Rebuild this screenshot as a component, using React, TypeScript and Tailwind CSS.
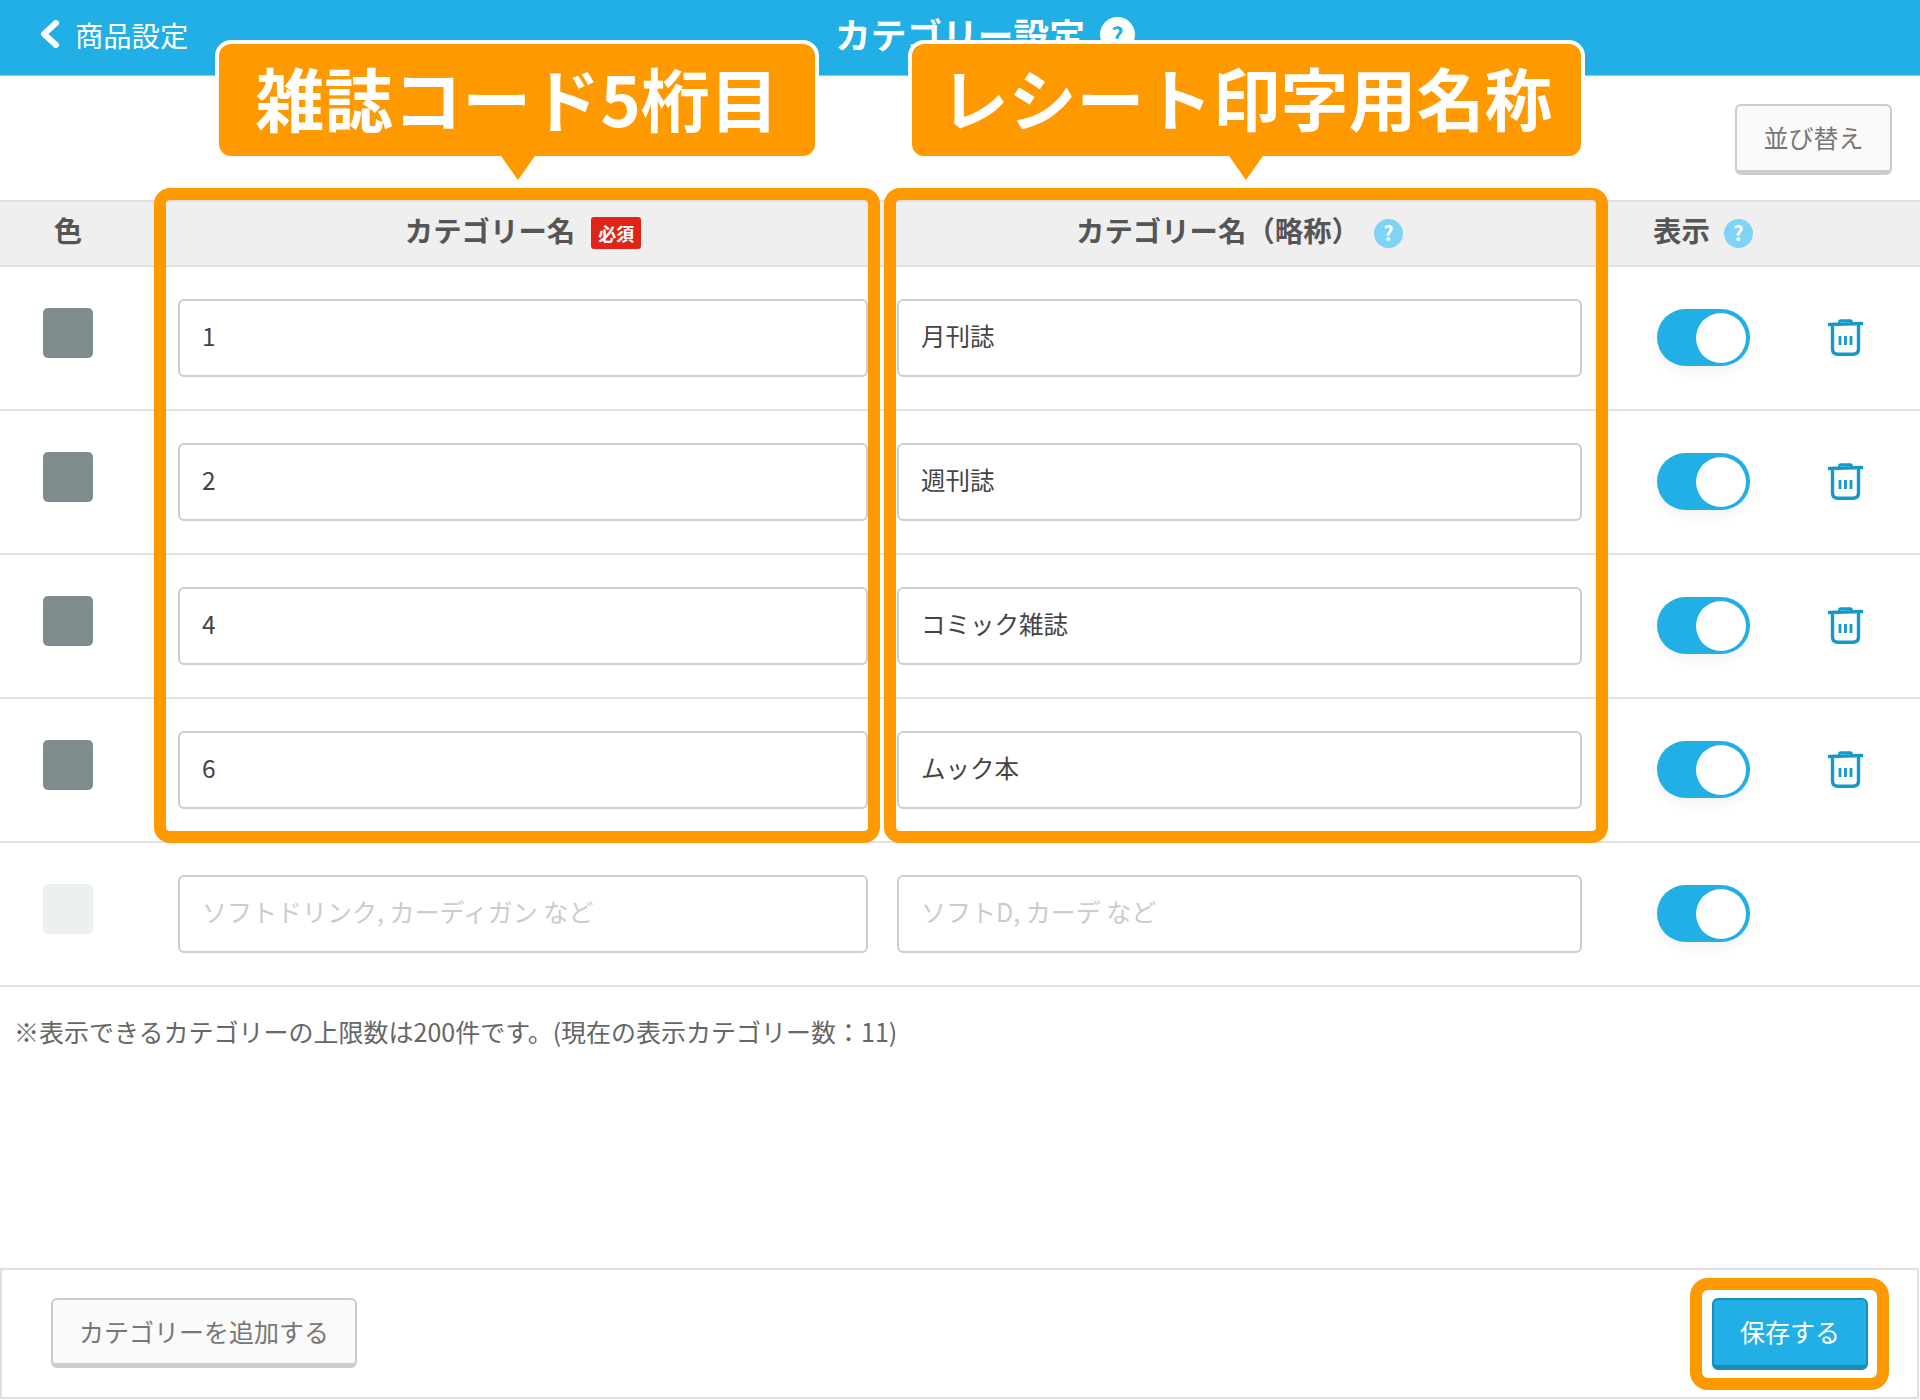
import React from 'react';

const rows = [
  { code: '1', short: '月刊誌' },
  { code: '2', short: '週刊誌' },
  { code: '4', short: 'コミック雑誌' },
  { code: '6', short: 'ムック本' },
];

const TrashIcon = () => (
  <svg width="35" height="37" viewBox="0 0 35 37" fill="none" stroke="#1698cf" strokeWidth="3.4" strokeLinecap="round">
    <path d="M1 5.5 L34 4.5" />
    <path d="M11.5 5 V3 Q11.5 1.7 13 1.7 H22 Q23.5 1.7 23.5 3 V5" strokeWidth="2.8" />
    <path d="M4.5 6 V30 Q4.5 35.3 10 35.3 H25 Q30.5 35.3 30.5 30 V6" />
    <path d="M12 17 V26 M17.5 17 V26 M23 17 V26" strokeWidth="2.8" strokeLinecap="butt" />
  </svg>
);

const HelpDot = ({ className }: { className: string }) => (
  <span className={`flex items-center justify-center rounded-full font-bold ${className}`}>?</span>
);

const Toggle = () => (
  <div className="flex h-[57px] w-[93px] shrink-0 items-center justify-end rounded-full bg-[#22afe6] pr-[4px] shadow-[0_8px_10px_rgba(0,0,0,0.04)]">
    <div className="h-[50px] w-[50px] rounded-full bg-white" />
  </div>
);

const Field = ({ text, placeholder, width }: { text?: string; placeholder?: boolean; width: string }) => (
  <div
    className={`flex h-[78px] shrink-0 items-center rounded-[6px] border-2 border-[#cfcfcf] bg-white px-[22px] pb-[3px] ${width} ${
      placeholder ? 'text-[25px] text-[#cccccc]' : 'text-[24.5px] text-[#444444]'
    }`}
  >
    {text}
  </div>
);

const Row = ({ code, short, empty }: { code: string; short: string; empty?: boolean }) => (
  <div className="flex h-[144px] items-center border-b-2 border-[#e2e2e2] pl-[43px]">
    <div className={`mb-[10px] mr-[85px] h-[50px] w-[50px] shrink-0 rounded-[5px] ${empty ? 'bg-[#ecf0f1]' : 'bg-[#7f8c8d]'}`} />
    <Field text={code} placeholder={empty} width="w-[690px]" />
    <div className="w-[29px] shrink-0" />
    <Field text={short} placeholder={empty} width="w-[685px]" />
    <div className="w-[75px] shrink-0" />
    <Toggle />
    {!empty && (
      <div className="ml-[78px] flex h-[37px] w-[35px] shrink-0">
        <TrashIcon />
      </div>
    )}
  </div>
);

const Callout = ({ text, className, tip }: { text: string; className: string; tip: string }) => (
  <div className={`absolute top-[40px] z-20 flex h-[120px] items-center justify-center rounded-[16px] border-4 border-white bg-[#ff9900] pb-[6px] font-bold text-white ${className}`}>
    <span className="whitespace-nowrap leading-none">{text}</span>
    <div className={`absolute top-[112px] h-0 w-0 border-x-[17px] border-t-[24px] border-x-transparent border-t-[#ff9900] ${tip}`} />
  </div>
);

export default function App() {
  return (
    <div className="relative flex h-[1400px] w-[1920px] flex-col overflow-hidden bg-white font-['Noto_Sans_CJK_JP','Noto_Sans',sans-serif]">
      <header className="relative flex h-[76px] shrink-0 items-start justify-center border-b border-[#7fd0f0] bg-[#22afe6] text-white">
        <div className="absolute left-[40px] top-[19px] flex items-center">
          <svg width="20" height="28" viewBox="0 0 20 28" fill="none" stroke="white" strokeWidth="6" strokeLinecap="round" strokeLinejoin="round">
            <path d="M16 3 L4 14 L16 25" />
          </svg>
          <span className="ml-[15px] mt-[2px] text-[28.3px] leading-none">商品設定</span>
        </div>
        <div className="relative pt-[16px]">
          <span className="block text-[35.7px] font-bold leading-none">カテゴリー設定</span>
          <HelpDot className="absolute left-full top-[17px] ml-[15px] h-[35px] w-[35px] bg-white text-[24px] text-[#22afe6]" />
        </div>
      </header>

      <div className="flex h-[124px] shrink-0 items-start justify-end pr-[28px] pt-[28px]">
        <button className="h-[71px] w-[157px] rounded-[6px] border-2 border-b-[5px] border-[#cccccc] bg-[#fafafa] text-[25px] text-[#777777]">
          並び替え
        </button>
      </div>

      <div className="flex h-[66.5px] shrink-0 items-center border-y-2 border-[#e0e0e0] bg-[#efefef] text-[28.4px] font-bold text-[#555555]">
        <div className="w-[178px] shrink-0 pb-[6px] pr-[42px] text-center leading-none">色</div>
        <div className="flex w-[690px] shrink-0 items-center justify-center">
          <span className="pb-[6px] leading-none">カテゴリー名</span>
          <span className="ml-[16px] flex h-[32px] w-[50px] items-center justify-center rounded-[3px] bg-[#e2231a] text-[18px] leading-none text-white">必須</span>
        </div>
        <div className="w-[29px] shrink-0" />
        <div className="flex w-[685px] shrink-0 items-center justify-center">
          <span className="pb-[6px] leading-none">カテゴリー名（略称）</span>
          <HelpDot className="ml-[14px] h-[29px] w-[29px] bg-[#7fd4f5] text-[20px] text-white" />
        </div>
        <div className="w-[71px] shrink-0" />
        <span className="pb-[6px] leading-none">表示</span>
        <HelpDot className="ml-[14px] h-[29px] w-[29px] bg-[#7fd4f5] text-[20px] text-white" />
      </div>

      {rows.map((r) => (
        <Row key={r.code} code={r.code} short={r.short} />
      ))}
      <Row code="ソフトドリンク, カーディガン など" short="ソフトD, カーデ など" empty />

      <p className="pl-[14px] pt-[27px] text-[25px] leading-[34px] text-[#666666]">
        ※表示できるカテゴリーの上限数は200件です。(現在の表示カテゴリー数：11)
      </p>

      <footer className="mb-[1px] mr-[1px] mt-auto flex h-[131px] shrink-0 items-center justify-between border-2 border-[#e0e0e0] pl-[49px] pr-[49px]">
        <button className="mb-[1px] h-[70px] w-[306px] rounded-[6px] border-2 border-b-[5px] border-[#cccccc] bg-[#fafafa] text-[25px] text-[#777777]">
          カテゴリーを追加する
        </button>
        <div className="relative">
          <button className="h-[72px] w-[156px] rounded-[6px] border-2 border-b-[5px] border-[#1a8cb8] bg-[#22afe6] text-[25px] text-white">
            保存する
          </button>
          <div className="pointer-events-none absolute -inset-y-[20px] -left-[22px] -right-[21px] rounded-[18px] border-[12px] border-[#ff9900]" />
        </div>
      </footer>

      <div className="pointer-events-none absolute left-[154px] top-[188px] z-10 h-[655px] w-[726px] rounded-[16px] border-[12px] border-[#ff9900]" />
      <div className="pointer-events-none absolute left-[884px] top-[188px] z-10 h-[655px] w-[724px] rounded-[16px] border-[12px] border-[#ff9900]" />

      <Callout text="雑誌コード5桁目" className="left-[215px] w-[604px] text-[69px]" tip="left-[282px]" />
      <Callout text="レシート印字用名称" className="left-[908px] w-[677px] text-[68px]" tip="left-[317px]" />
    </div>
  );
}
